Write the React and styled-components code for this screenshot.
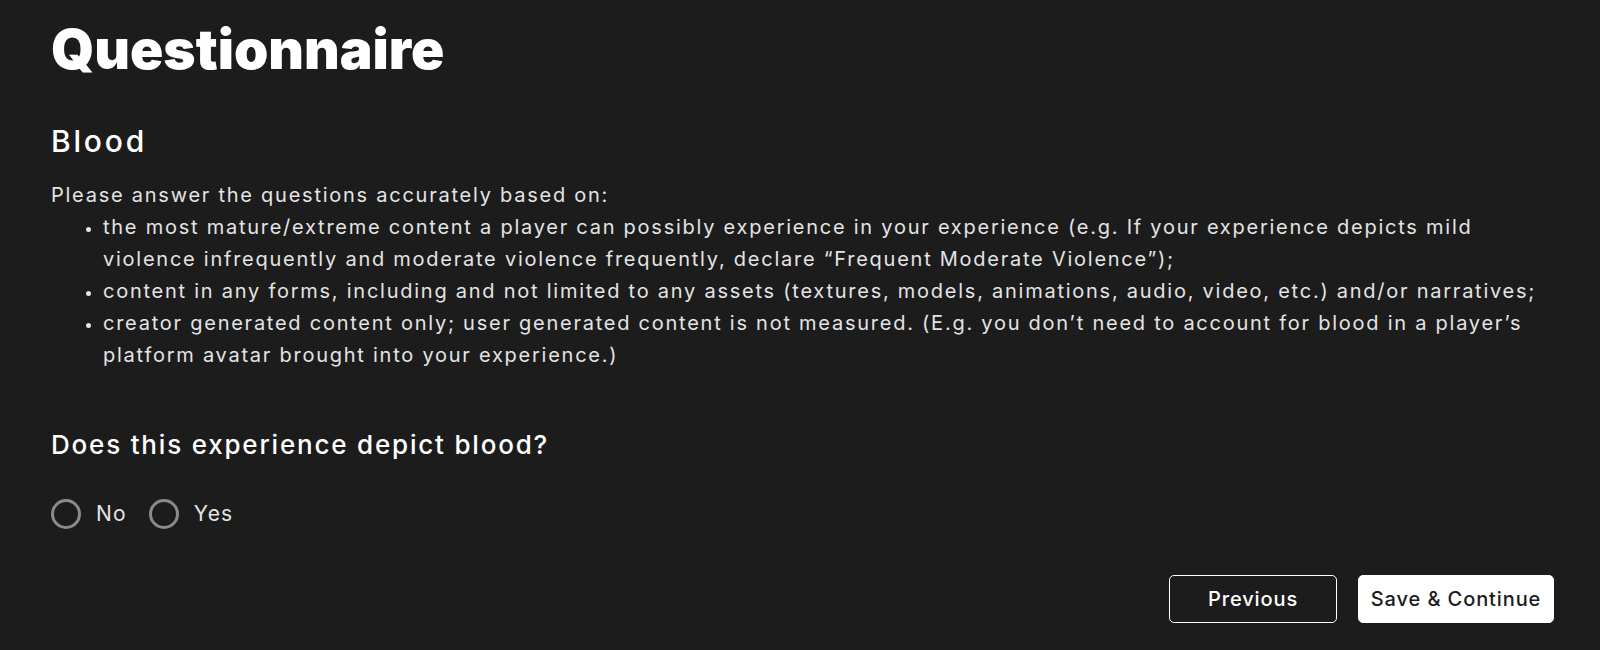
import React from 'react';
import styled, { createGlobalStyle } from 'styled-components';

const GlobalStyle = createGlobalStyle`
  html, body {
    margin: 0;
    padding: 0;
    background: #1c1c1c;
  }
  body {
    font-family: Inter, "Noto Sans", "Liberation Sans", sans-serif;
    color: #fff;
  }
`

const Page = styled.div`
  width: 1600px;
  height: 650px;
  box-sizing: border-box;
  padding: 22px 46px 0 51px;
  background: #1c1c1c;
  display: flex;
  flex-direction: column;
`

const Title = styled.h1`
  margin: 0;
  font-size: 55px;
  line-height: 55px;
  font-weight: 900;
  letter-spacing: 0;
  color: #fff;
`

const SectionTitle = styled.h2`
  margin: 46px 0 0;
  font-size: 30px;
  line-height: 36px;
  font-weight: 500;
  letter-spacing: 2.8px;
  color: #fff;
`

const Intro = styled.div`
  margin-top: 20px;
  font-size: 20px;
  line-height: 32px;
  font-weight: 400;
  letter-spacing: 1.75px;
  color: #e4e4e4;
`

const Lead = styled.p`
  margin: 0;
`

const Bullets = styled.ul`
  margin: 0;
  padding-left: 52px;
  list-style: disc;

  li::marker {
    font-size: 16px;
  }
`

const Question = styled.h3`
  margin: 58px 0 0;
  font-size: 26px;
  line-height: 32px;
  font-weight: 500;
  letter-spacing: 1.8px;
  color: #fff;
`

const Options = styled.div`
  margin-top: 37px;
  display: flex;
  align-items: center;
  gap: 22px;
`

const Option = styled.label`
  display: flex;
  align-items: center;
  gap: 15px;
  font-size: 21px;
  line-height: 32px;
  letter-spacing: 1.2px;
  color: #e4e4e4;
  cursor: pointer;
`

const RadioCircle = styled.span`
  width: 30px;
  height: 30px;
  box-sizing: border-box;
  border-radius: 50%;
  border: 3px solid #8a8a8a;
`

const Actions = styled.div`
  margin-top: 45px;
  display: flex;
  justify-content: flex-end;
  gap: 21px;
`

const Button = styled.button`
  height: 48px;
  box-sizing: border-box;
  border-radius: 5px;
  font-family: inherit;
  font-size: 20px;
  font-weight: 500;
  letter-spacing: 0.9px;
  cursor: pointer;
  border: 1.5px solid #fff;
  background: ${(p) => (p.$primary ? '#fff' : 'transparent')};
  color: ${(p) => (p.$primary ? '#1c1c1c' : '#fff')};
  width: ${(p) => (p.$primary ? '196px' : '168px')};
`

const App = () => {
  return (
    <>
      <GlobalStyle />
      <Page>
        <Title>Questionnaire</Title>
        <SectionTitle>Blood</SectionTitle>
        <Intro>
          <Lead>Please answer the questions accurately based on:</Lead>
          <Bullets>
            <li>
              the most mature/extreme content a player can possibly experience in your experience (e.g. If your
              experience depicts mild violence infrequently and moderate violence frequently, declare “Frequent
              Moderate Violence”);
            </li>
            <li>
              content in any forms, including and not limited to any assets (textures, models, animations, audio,
              video, etc.) and/or narratives;
            </li>
            <li>
              creator generated content only; user generated content is not measured. (E.g. you don’t need to
              account for blood in a player’s platform avatar brought into your experience.)
            </li>
          </Bullets>
        </Intro>
        <Question>Does this experience depict blood?</Question>
        <Options>
          <Option>
            <RadioCircle />
            No
          </Option>
          <Option>
            <RadioCircle />
            Yes
          </Option>
        </Options>
        <Actions>
          <Button>Previous</Button>
          <Button $primary>Save &amp; Continue</Button>
        </Actions>
      </Page>
    </>
  );
};

export default App;
